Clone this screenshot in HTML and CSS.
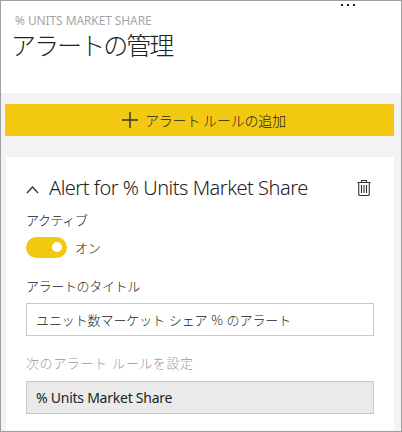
FILE: index.html
```
<!DOCTYPE html>
<html lang="ja">
<head>
<meta charset="utf-8">
<title>アラートの管理</title>
<link rel="stylesheet" href="styles.css">
</head>
<body>
<main class="panel">
  <header class="header">
    <div class="more"><i></i><i></i><i></i></div>
    <div class="eyebrow">% UNITS MARKET SHARE</div>
    <h1 class="title">アラートの管理</h1>
  </header>
  <section class="body">
    <button class="add">
      <svg class="plus" width="18" height="18" viewBox="0 0 18 18"><path d="M9 1v16M1 9h16"/></svg>
      <span class="add-label">アラート ルールの追加</span>
    </button>
    <article class="card">
      <div class="card-head">
        <svg class="chevron" width="13" height="9" viewBox="0 0 13 9"><path d="M1 8l5.500-6L12 8"/></svg>
        <h2 class="card-title">Alert for % Units Market Share</h2>
        <svg class="trash" width="14" height="18" viewBox="0 0 14 18"><path d="M.5 3.500h13M4.500 3V1.500h5V3M1.700 3.500v12q0 1 1 1h8.600q1 0 1-1v-12M4.500 6v8M7 6v8M9.500 6v8"/></svg>
      </div>
      <div class="label active-label">アクティブ</div>
      <div class="toggle-row"><span class="toggle"><i class="knob"></i></span><span class="on">オン</span></div>
      <div class="label name-label">アラートのタイトル</div>
      <div class="field">ユニット数マーケット シェア % のアラート</div>
      <div class="label rule-label">次のアラート ルールを設定</div>
      <div class="field disabled">% Units Market Share</div>
    </article>
  </section>
</main>
</body>
</html>
```
FILE: styles.css
```
* { box-sizing: border-box; }
body {
  margin: 0;
  font-family: "Noto Sans", "Noto Sans CJK JP", sans-serif;
  font-size: 14px;
  color: #222;
}
.panel {
  width: 402px;
  height: 432px;
  border: 1px solid #a0a0a0;
  background: #f3f3f3;
  overflow: hidden;
  white-space: nowrap;
}
.header { height: 92px; padding: 3px 0 0 10px; background: #fff; }
.more { display: flex; gap: 4px; margin-left: 330px; height: 9px; }
.more i { width: 2px; height: 2px; background: #222; }
.eyebrow { padding-left: 4px; font-size: 12px; line-height: 16px; letter-spacing: -.1px; color: #a6a6a6; }
.title { margin: 0; font: 300 25px/30px "Noto Sans CJK JP", sans-serif; letter-spacing: -1.950px; }
.body { padding: 11px 7px 0 4px; }
.add {
  display: flex;
  align-items: center;
  width: 389px;
  height: 32px;
  padding: 0 0 0 116px;
  border: 0;
  background: #f2c811;
  color: #222;
  font: 300 14px/20px "Noto Sans CJK JP", sans-serif;
  letter-spacing: -.2px;
}
.plus { margin-right: 6px; }
.add-label { padding-bottom: 1px; }
svg { flex: none; fill: none; stroke: #333; }
.plus { stroke-width: 1.4; }
.card { width: 388px; height: 273px; margin: 21px 0 0 1px; padding: 18px 0 0 20px; background: #fff; }
.card-head { display: flex; align-items: center; height: 26px; }
.card-title { margin: 0 0 0 10px; width: 308px; font-size: 20px; font-weight: 300; line-height: 26px; letter-spacing: -.5px; }
.trash { stroke: #333; stroke-width: 1.100; margin-bottom: 1px; }
.chevron { stroke-width: 1.300; margin-top: 3px; }
.label { font: 300 13px/20px "Noto Sans CJK JP", sans-serif; }
.active-label { margin-top: 9px; letter-spacing: -.4px; }
.toggle-row { display: flex; align-items: center; height: 21px; margin-top: 7px; }
.toggle { width: 41px; height: 21px; padding: 5px 0 0 26px; border-radius: 11px; background: #f2c811; }
.knob { display: block; width: 10px; height: 10px; border-radius: 50%; background: #fff; }
.on { margin-left: 8px; font: 300 13px/20px "Noto Sans CJK JP", sans-serif; letter-spacing: -.3px; }
.name-label { margin-top: 18px; letter-spacing: -.35px; }
.field {
  display: flex;
  align-items: center;
  width: 348px;
  height: 33px;
  margin-top: 7px;
  padding-left: 9px;
  border: 1px solid #c8c8c8;
  font: 300 13px/20px "Noto Sans CJK JP", sans-serif;
  word-spacing: 1px;
  letter-spacing: -.1px;
}
.rule-label { margin-top: 17px; margin-bottom: 8px; color: #999; letter-spacing: .6px; word-spacing: 1px; }
.disabled { background: #eaeaea; font: 400 14px/20px "Noto Sans", sans-serif; letter-spacing: -.25px; word-spacing: 0; }
```
